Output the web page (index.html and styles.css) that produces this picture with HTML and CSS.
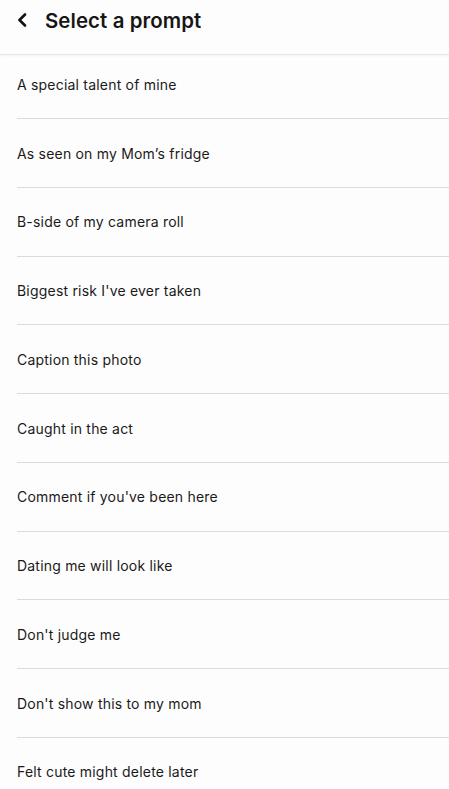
FILE: index.html
```html
<!DOCTYPE html>
<html>
<head>
<meta charset="utf-8">
<link rel="stylesheet" href="styles.css">
</head>
<body>
<header class="header">
  <svg class="back" width="12" height="14" viewBox="0 0 12 14"><path d="M9 1.5 L3.5 7 L9 12.5" fill="none" stroke="#111" stroke-width="2.6" stroke-linecap="round" stroke-linejoin="round"/></svg>
  <h1 class="title">Select a prompt</h1>
</header>
<ul class="list">
  <li class="item">A special talent of mine</li>
  <li class="item">As seen on my Mom’s fridge</li>
  <li class="item">B-side of my camera roll</li>
  <li class="item">Biggest risk I've ever taken</li>
  <li class="item">Caption this photo</li>
  <li class="item">Caught in the act</li>
  <li class="item">Comment if you've been here</li>
  <li class="item">Dating me will look like</li>
  <li class="item">Don't judge me</li>
  <li class="item">Don't show this to my mom</li>
  <li class="item">Felt cute might delete later</li>
</ul>
</body>
</html>
```
FILE: styles.css
```css
html, body { margin: 0; padding: 0; }
body {
  background: #fefdfd;
  font-family: Inter, "Noto Sans", sans-serif;
  color: #1a1a1a;
  width: 449px;
  height: 789px;
  overflow: hidden;
}
.header {
  height: 54px;
  display: flex;
  align-items: center;
  padding-left: 16px;
  border-bottom: 1px solid #e6e4e4;
  box-shadow: 0 1px 2px rgba(0,0,0,0.04);
  box-sizing: content-box;
}
.back { margin-right: 17px; margin-top: -14px; }
.title {
  margin: 0;
  font-size: 20.4px;
  font-weight: 600;
  color: #161616;
  margin-top: -14px;
  letter-spacing: 0.1px;
}
.list { list-style: none; margin: 0; padding: 0 0 0 17px; }
.item {
  font-size: 14px;
  line-height: 20px;
  letter-spacing: 0.2px;
  padding: 24.5px 0 23.25px;
  border-bottom: 1px solid #dcdadb;
  height: 20px;
}
.item:first-child { padding-top: 19.75px; }
.item:last-child { border-bottom: none; }
```
